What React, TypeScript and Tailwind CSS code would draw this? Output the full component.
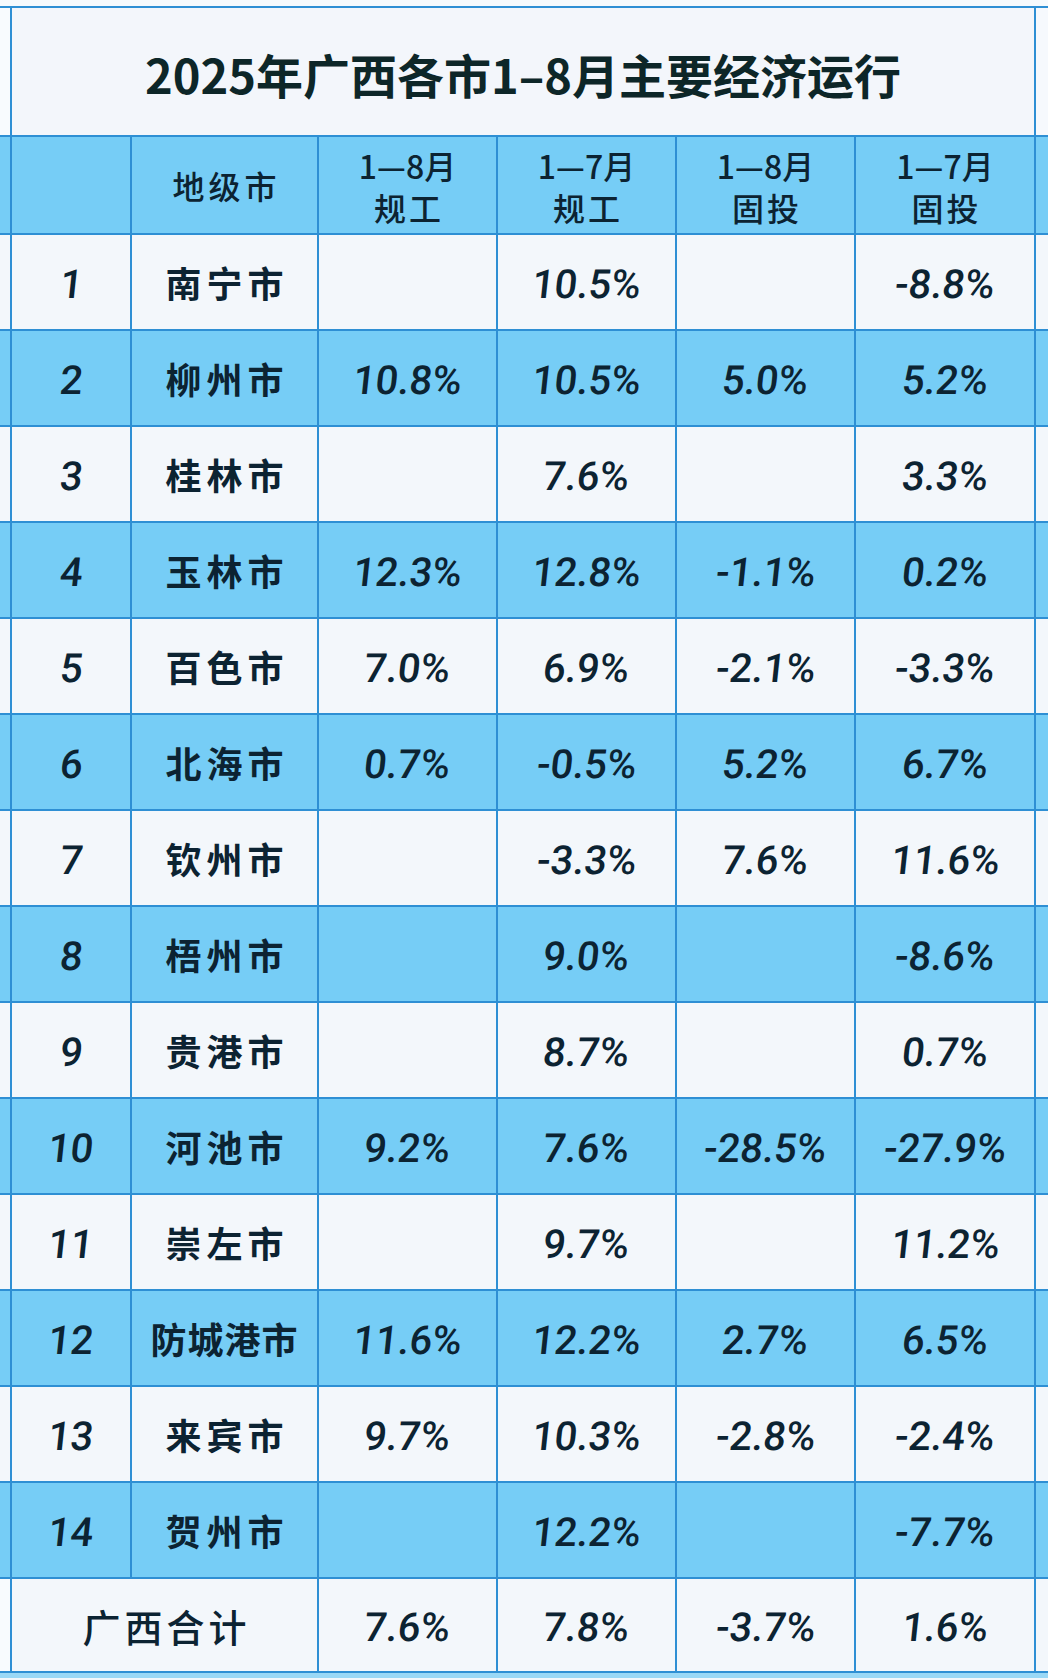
import React from "react";

const rows: [number, string, string, string, string, string][] = [
  [1, "南宁市", "", "10.5%", "", "-8.8%"],
  [2, "柳州市", "10.8%", "10.5%", "5.0%", "5.2%"],
  [3, "桂林市", "", "7.6%", "", "3.3%"],
  [4, "玉林市", "12.3%", "12.8%", "-1.1%", "0.2%"],
  [5, "百色市", "7.0%", "6.9%", "-2.1%", "-3.3%"],
  [6, "北海市", "0.7%", "-0.5%", "5.2%", "6.7%"],
  [7, "钦州市", "", "-3.3%", "7.6%", "11.6%"],
  [8, "梧州市", "", "9.0%", "", "-8.6%"],
  [9, "贵港市", "", "8.7%", "", "0.7%"],
  [10, "河池市", "9.2%", "7.6%", "-28.5%", "-27.9%"],
  [11, "崇左市", "", "9.7%", "", "11.2%"],
  [12, "防城港市", "11.6%", "12.2%", "2.7%", "6.5%"],
  [13, "来宾市", "9.7%", "10.3%", "-2.8%", "-2.4%"],
  [14, "贺州市", "", "12.2%", "", "-7.7%"],
];

const FONT = {
  fontFamily: '"Noto Sans CJK SC", "Noto Sans", sans-serif',
};

function Num({ v }: { v: string | number }) {
  return (
    <span
      className="inline-block -skew-x-6 translate-y-[3px] text-[40px] font-medium leading-none"
      style={{ fontFamily: 'Roboto, "Noto Sans CJK SC", sans-serif' }}
    >
      {v}
    </span>
  );
}

function Cell({
  w,
  children,
}: {
  w: string;
  children?: React.ReactNode;
}) {
  return (
    <div
      className={`${w} h-full border-l-2 border-[#2e8fd4] flex items-center justify-center`}
    >
      {children}
    </div>
  );
}

export default function App() {
  return (
    <div
      className="w-[1048px] h-[1680px] bg-[#f3f7fb] text-[#0c2332] overflow-hidden"
      style={FONT}
    >
      <div className="h-[6px] bg-[#f6fafd]" />
      {/* Title row */}
      <div className="flex h-[131px] border-t-2 border-b-2 border-[#2e8fd4] bg-[#f3f6fb]">
        <div className="w-[10px] h-full bg-[#f8fbfe]" />
        <div className="w-[1024px] h-full border-l-2 border-[#2e8fd4] flex items-center justify-center pt-[6px]">
          <span className="text-[47px] font-bold tracking-[0px] text-[#0d2628]">
            2025年广西各市1–8月主要经济运行
          </span>
        </div>
        <div className="w-[14px] h-full border-l-2 border-[#2e8fd4] bg-[#f6f9fd]" />
      </div>
      {/* Header row */}
      <div className="flex h-[98px] border-b-2 border-[#2e8fd4] bg-[#76cdf6]">
        <div className="w-[10px] h-full" />
        <Cell w="w-[120px]" />
        <Cell w="w-[187px]">
          <span className="text-[32px] font-medium tracking-[4px] pl-[4px]">地级市</span>
        </Cell>
        {[
          ["1—8月", "规工"],
          ["1—7月", "规工"],
          ["1—8月", "固投"],
          ["1—7月", "固投"],
        ].map(([a, b], i) => (
          <Cell key={i} w={i === 3 ? "w-[180px]" : "w-[179px]"}>
            <div className="flex flex-col items-center text-[32px] font-medium leading-[42px] pt-[2px]">
              <span>{a}</span>
              <span className="tracking-[3px] pl-[3px]">{b}</span>
            </div>
          </Cell>
        ))}
        <Cell w="w-[14px]" />
      </div>
      {/* Data rows */}
      {rows.map((r, idx) => {
        const blue = idx % 2 === 1;
        return (
          <div
            key={r[0]}
            className={`flex h-[96px] border-b-2 border-[#2e8fd4] ${
              blue ? "bg-[#76cdf6]" : "bg-[#f3f7fb]"
            }`}
          >
            <div className="w-[10px] h-full" />
            <Cell w="w-[120px]">
              <Num v={r[0]} />
            </Cell>
            <Cell w="w-[187px]">
              <span
                className={`text-[36px] font-semibold ${
                  r[1].length > 3 ? "tracking-[1px]" : "tracking-[5px] pl-[5px]"
                }`}
              >
                {r[1]}
              </span>
            </Cell>
            <Cell w="w-[179px]">{r[2] && <Num v={r[2]} />}</Cell>
            <Cell w="w-[179px]">{r[3] && <Num v={r[3]} />}</Cell>
            <Cell w="w-[179px]">{r[4] && <Num v={r[4]} />}</Cell>
            <Cell w="w-[180px]">{r[5] && <Num v={r[5]} />}</Cell>
            <Cell w="w-[14px]" />
          </div>
        );
      })}
      {/* Total row */}
      <div className="flex h-[94px] border-b-2 border-[#2e8fd4] bg-[#f3f7fb]">
        <div className="w-[10px] h-full bg-[#f8fbfe]" />
        <Cell w="w-[307px]">
          <span className="text-[38px] font-medium tracking-[4px] pl-[4px]">广西合计</span>
        </Cell>
        <Cell w="w-[179px]">
          <Num v="7.6%" />
        </Cell>
        <Cell w="w-[179px]">
          <Num v="7.8%" />
        </Cell>
        <Cell w="w-[179px]">
          <Num v="-3.7%" />
        </Cell>
        <Cell w="w-[180px]">
          <Num v="1.6%" />
        </Cell>
        <Cell w="w-[14px]" />
      </div>
      <div className="h-[5px] bg-[#9ad8f6]" />
    </div>
  );
}
